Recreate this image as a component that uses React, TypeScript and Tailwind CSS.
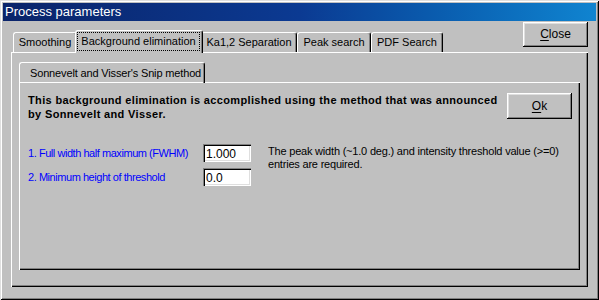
const raised =
  'shadow-[inset_-1px_-1px_0_#000,inset_1px_1px_0_#fff,inset_-2px_-2px_0_#808080,inset_2px_2px_0_#dfdfdf]';
const frame = 'shadow-[inset_1px_1px_0_#fff,inset_-1px_-1px_0_#000,inset_-2px_-2px_0_#808080]';
const sunken =
  'shadow-[inset_1px_1px_0_#808080,inset_2px_2px_0_#000,inset_-1px_-1px_0_#fff,inset_-2px_-2px_0_#dfdfdf]';

interface TabProps {
  label: string;
  width: string;
  selected?: boolean;
}

const Tab = ({ label, width, selected }: TabProps) => {
  if (selected) {
    return (
      <div
        className={`relative z-10 -mx-[2px] -mb-px flex h-[23px] ${width} rounded-t-[3px] border-l border-t border-white bg-[#c0c0c0] pr-px shadow-[inset_-1px_0_0_#808080] border-r border-r-black`}
      >
        <div className="mx-px mt-px mb-[2px] flex flex-1 items-center justify-center border border-dotted border-black pb-px whitespace-nowrap">
          {label}
        </div>
      </div>
    );
  }
  return (
    <div
      className={`flex h-[20px] ${width} items-center justify-center rounded-t-[3px] border-l border-t border-r border-white border-r-black pb-px whitespace-nowrap shadow-[inset_-1px_0_0_#808080]`}
    >
      {label}
    </div>
  );
};

const Button = ({ first, rest, className }: { first: string; rest: string; className: string }) => (
  <button className={`flex shrink-0 items-center justify-center bg-[#c0c0c0] pb-px text-[12px] text-black ${raised} ${className}`}>
    <span className="underline underline-offset-2">{first}</span>
    {rest}
  </button>
);

export default function App() {
  return (
    <div
      className={`flex h-[300px] w-[599px] flex-col bg-[#c0c0c0] p-[3px] text-[11px] leading-[14px] text-black shadow-[inset_1px_1px_0_#dfdfdf,inset_-1px_-1px_0_#000,inset_2px_2px_0_#fff,inset_-2px_-2px_0_#808080]`}
      style={{ fontFamily: '"Liberation Sans", Arial, sans-serif' }}
    >
      <div className="flex h-[18px] items-center bg-linear-to-r from-[#0a246a] via-[#0b3a92] to-[#1084d0] pl-[2px] text-[13px] text-white">
        Process parameters
      </div>

      <div className="mt-px ml-[8px] flex h-[30px] w-[577px] items-start justify-between">
        <div className="flex items-end self-end pl-[2px]">
          <Tab label="Smoothing" width="w-[64px]" />
          <Tab label="Background elimination" width="w-[128px]" selected />
          <Tab label="Ka1,2 Separation" width="w-[96px]" />
          <Tab label="Peak search" width="w-[74px]" />
          <Tab label="PDF Search" width="w-[72px]" />
        </div>
        <Button first="C" rest="lose" className="h-[25px] w-[65px]" />
      </div>

      <div className={`ml-[8px] flex h-[235px] w-[577px] flex-col px-[8px] pt-[10px] ${frame}`}>
        <div className="flex">
          <div className="relative z-10 -mb-px flex h-[21px] w-[186px] items-center rounded-t-[3px] border-l border-t border-white border-r border-r-black pb-px pl-[10px] whitespace-nowrap tracking-[-0.15px] shadow-[inset_-1px_0_0_#808080]">
            Sonnevelt and Visser's Snip method
          </div>
        </div>
        <div className={`flex h-[188px] w-[561px] flex-col pl-[9px] pr-[8px] pt-[11px] ${frame}`}>
          <div className="flex items-start justify-between">
            <p className="font-bold tracking-[0.35px]">
              This background elimination is accomplished using the method that was announced
              <br />
              by Sonnevelt and Visser.
            </p>
            <Button first="O" rest="k" className="h-[26px] w-[65px]" />
          </div>

          <div className="mt-[23px] flex">
            <div className="flex w-[175px] shrink-0 flex-col gap-[6px] text-[#0000ff] tracking-[-0.45px]">
              <div className="flex h-[18px] items-center whitespace-nowrap">1. Full width half maximum (FWHM)</div>
              <div className="flex h-[18px] items-center whitespace-nowrap">2. Minimum height of threshold</div>
            </div>
            <div className="flex w-[48px] shrink-0 flex-col gap-[6px]">
              <input
                readOnly
                value="1.000"
                className={`h-[18px] w-[48px] bg-white px-[3px] pt-px text-[12px] outline-none ${sunken}`}
              />
              <input
                readOnly
                value="0.0"
                className={`h-[18px] w-[48px] bg-white px-[3px] pt-px text-[12px] outline-none ${sunken}`}
              />
            </div>
            <div className="ml-[17px] pt-[1px] leading-[13px] whitespace-nowrap tracking-[-0.2px]">
              The peak width (~1.0 deg.) and intensity threshold value (&gt;=0)
              <br />
              entries are required.
            </div>
          </div>
        </div>
      </div>
    </div>
  );
}
